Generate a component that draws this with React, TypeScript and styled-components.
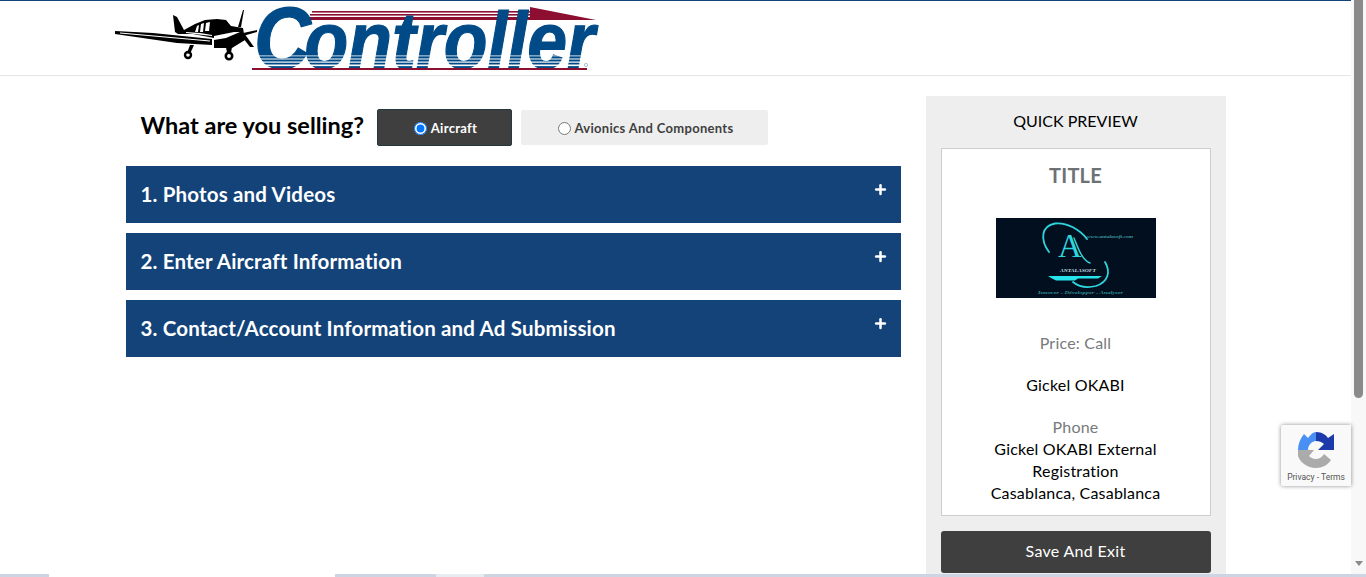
import styled, { createGlobalStyle } from 'styled-components';
import { Plus } from 'lucide-react';

const GlobalStyle = createGlobalStyle`
  html, body {
    margin: 0;
    height: 100%;
    overflow: hidden;
    background: #fff;
    font-family: Lato, "Open Sans", sans-serif;
  }
  * {
    box-sizing: border-box;
  }
`;

const Screen = styled.div`
  height: 100vh;
  display: flex;
  flex-direction: column;
  overflow: hidden;
`;

const Viewport = styled.div`
  height: 574px;
  display: flex;
  overflow: hidden;
  position: relative;
`;

const Page = styled.div`
  flex: 1;
  min-width: 0;
  border-top: 1px solid #134379;
`;

const Header = styled.header`
  height: 75px;
  padding: 4px 0 0 113px;
  border-bottom: 1px solid #e6e6e6;
`;

const Container = styled.main`
  width: 1100px;
  margin: 20px auto 0;
  display: flex;
  align-items: flex-start;
  gap: 25px;
`;

const LeftColumn = styled.section`
  width: 775px;
`;

const TypeRow = styled.div`
  height: 50px;
  padding: 13px 0 0 15px;
  margin-bottom: 20px;
  display: flex;
  align-items: center;
  gap: 9px;
`;

const TypeLabel = styled.h2`
  margin: -5px 4px 0 0;
  width: 223px;
  font-size: 23.5px;
  font-weight: 700;
  white-space: nowrap;
  color: #000;
`;

const TypeOption = styled.label<{ $active?: boolean; $width: number }>`
  width: ${(p) => p.$width}px;
  height: ${(p) => (p.$active ? 37 : 35)}px;
  padding-left: 3px;
  display: flex;
  align-items: center;
  justify-content: center;
  gap: 4px;
  font-size: 13px;
  font-weight: 700;
  letter-spacing: 0.3px;
  border-radius: 2px;
  color: ${(p) => (p.$active ? '#fff' : '#3f3f3f')};
  background: ${(p) => (p.$active ? '#3f3f3f' : '#eeeeee')};
  border: ${(p) => (p.$active ? '1px solid #24383f' : 'none')};

  input {
    margin: 1px 0 0;
    width: 13px;
    height: 13px;
  }
`;

const Accordion = styled.div`
  display: flex;
  flex-direction: column;
  gap: 10px;
`;

const AccordionBar = styled.div`
  height: 57px;
  padding: 0 15px 2px;
  display: flex;
  align-items: center;
  justify-content: space-between;
  background: #134379;
  color: #fff;
  font-size: 20.5px;
  font-weight: 700;
  letter-spacing: 0.17px;

  svg {
    margin: -9px -2px 0 0;
  }
`;

const PreviewPanel = styled.aside`
  width: 300px;
  padding: 14px 15px 20px;
  background: #eeeeee;
`;

const PreviewHeading = styled.h3`
  margin: 0 0 17px;
  height: 21px;
  line-height: 21px;
  font-size: 16px;
  font-weight: 400;
  text-align: center;
  color: #000;
`;

const PreviewCard = styled.div`
  height: 368px;
  padding: 14px 15px 0;
  background: #fff;
  border: 1px solid #cccccc;
  text-align: center;
`;

const CardTitle = styled.div`
  height: 24px;
  line-height: 24px;
  font-size: 20px;
  font-weight: 700;
  letter-spacing: 0.2px;
  color: #6e7174;
`;

const CardImage = styled.svg`
  display: block;
  width: 160px;
  height: 80px;
  margin: 31px auto 34px;
`;

const CardLine = styled.div<{ $muted?: boolean; $gap?: number }>`
  line-height: 22px;
  font-size: 16px;
  letter-spacing: 0.2px;
  color: ${(p) => (p.$muted ? '#777a7c' : '#000')};
  margin-top: ${(p) => p.$gap ?? 0}px;
`;

const SaveButton = styled.button`
  display: block;
  width: 100%;
  height: 42px;
  margin-top: 15px;
  padding: 0 0 3px;
  border: none;
  border-radius: 3px;
  background: #3f3f3f;
  color: #fff;
  font-family: inherit;
  font-size: 16px;
  letter-spacing: 0.3px;
`;

const ScrollTrack = styled.div`
  width: 15px;
  flex: none;
  background: #f8f8f8;
  display: flex;
  flex-direction: column;
  align-items: center;
  justify-content: space-between;
  padding-bottom: 8px;
`;

const ScrollThumb = styled.div`
  width: 9px;
  height: 398px;
  background: #8a8a8a;
  border-radius: 0 0 5px 5px;
`;

const ScrollArrow = styled.div`
  width: 0;
  height: 0;
  border-left: 4.5px solid transparent;
  border-right: 4.5px solid transparent;
  border-top: 5px solid #8a8a8a;
`;

const RecaptchaBadge = styled.div`
  position: absolute;
  left: 1281px;
  top: 425px;
  width: 70px;
  height: 61px;
  background: #f9f9f9;
  border-radius: 2px 0 0 2px;
  box-shadow: 0 0 4px rgba(0, 0, 0, 0.45);
  display: flex;
  flex-direction: column;
  align-items: center;
  padding-top: 7px;
`;

const RecaptchaTerms = styled.div`
  margin-top: 3px;
  font-family: Roboto, sans-serif;
  font-size: 8.5px;
  line-height: 12px;
  white-space: nowrap;
  color: #555;
`;

const TabStrip = styled.div`
  height: 3px;
  flex: none;
  display: flex;
  background: #cdd4e2;
`;

const StripTab = styled.div<{ $width: number; $left: number; $tone: string }>`
  width: ${(p) => p.$width}px;
  margin-left: ${(p) => p.$left}px;
  background: ${(p) => p.$tone};
`;

function ControllerLogo() {
  return (
    <svg width="484" height="67" viewBox="113 5 484 67" style={{ display: 'block', overflow: 'visible' }}>
      {/* red arrow behind the word */}
      <g fill="#8c0f32">
        <rect x="312" y="11" width="218" height="1.6" />
        <rect x="310" y="14" width="225" height="1.6" />
        <rect x="308" y="17" width="240" height="3" />
        <polygon points="530,7 596,20 530,20" />
      </g>
      {/* plane */}
      <g fill="#000">
        <polygon points="115,31 153,33 212,39 212,45 177,43 115,34" />
        <polygon points="173,15 177,17 184,30 195,24 205,20 217,19 226,20 231,26 243,28 245,40 232,48 214,48 214,38 193,34 178,34 175,32" />
        <polygon points="243,10 244,10 241,27 238,27" />
        <polygon points="240,34 244,33 254,47 250,47" />
        <polygon points="243,33 257,30 257,32 243,36" />
        <polygon points="190,45 194,45 190,54 187,53" />
        <polygon points="226,47 232,47 231,53 227,53" />
        <circle cx="188" cy="55" r="3" fill="none" stroke="#000" strokeWidth="2.4" />
        <circle cx="229" cy="56" r="3.2" fill="none" stroke="#000" strokeWidth="2.6" />
      </g>
      <g fill="#fff">
        <polygon points="195,32 197,26 199,25 198,32" />
        <polygon points="200,32 201,24 204,23 203,32" />
        <polygon points="205,31 206,23 210,22 209,31" />
        <polygon points="120,32.6 210,40.6 210,41.6 120,33.4" />
        <polygon points="214,36 234,32 240,32 226,38 214,40" />
        <polygon points="186,32 200,33 212,35 212,36 186,33" />
      </g>
      {/* word, squeezed as one text */}
      <text
        transform="translate(254 68) scale(0.895 1)"
        fill="#004b87"
        stroke="#004b87"
        strokeWidth="1.2"
        fontFamily='"Liberation Sans", sans-serif'
        fontWeight="700"
        fontStyle="italic"
      >
        <tspan fontSize="88">C</tspan>
        <tspan fontSize="80" dx="-7">ontroller</tspan>
      </text>
      {/* speed lines cut through the bottom of the word */}
      <g fill="#fff">
        <rect x="250" y="55.5" width="345" height="0.8" />
        <rect x="250" y="58.5" width="345" height="1" />
        <rect x="250" y="61.5" width="345" height="1.2" />
        <rect x="250" y="64.5" width="345" height="1.6" />
      </g>
      <rect x="252" y="68" width="335" height="2" fill="#8c0f32" />
      <circle cx="586" cy="65" r="1.6" fill="none" stroke="#7b93b0" strokeWidth="0.6" />
    </svg>
  );
}

function AntalasoftImage() {
  return (
    <CardImage viewBox="0 0 160 80">
      <rect width="160" height="80" fill="#020f1e" />
      <g fill="none" stroke="#2fd5de" strokeLinecap="round">
        <path d="M53 34 C44 22 45 8 59 5.5 C71 4 84 12 91 21" strokeWidth="1.8" />
        <path d="M109 44 C115 54 112 64 100 68 C92 70 83 69 77 64" strokeWidth="1.8" />
        <path d="M78 20 C82 30 86 42 94 45" strokeWidth="1.4" />
      </g>
      <text x="62" y="39" fontSize="33" fontFamily='"Liberation Serif", serif' fill="#2fd5de">A</text>
      <path d="M52 58 H106 L102 60.5 H82 L79 62.5 H60 L56 60.5 Z" fill="#27e3ea" />
      <g fontFamily='"Liberation Serif", serif' fontStyle="italic" fontWeight="700">
        <text x="91" y="20" fontSize="4.6" fill="#3f9ba3" textLength="46" lengthAdjust="spacingAndGlyphs">www.antalasoft.com</text>
        <text x="64" y="54" fontSize="4.6" fill="#c2dfe0" textLength="36" lengthAdjust="spacingAndGlyphs">ANTALASOFT</text>
        <text x="42" y="76" fontSize="5" fill="#2f8f96" textLength="85" lengthAdjust="spacingAndGlyphs">Innover - Développer - Analyser</text>
      </g>
    </CardImage>
  );
}

function RecaptchaIcon() {
  return (
    <svg width="36" height="36" viewBox="0 0 36 36">
      <path d="M0 18 C0 12 2 7 6 2 L10 6 C13 2 15 0 18 0 V9 C14 9 10 13 10 18 Z" fill="#4a90f4" />
      <path d="M18 0 C24 0 28 3 30 6 L36 2 V18 H20 L26 12 C24 10 21 9 18 9 Z" fill="#1c3aa9" />
      <path d="M0 18 H16 L11 24 C13 26 15 27 18 27 C21 27 24 25.5 26 22 L33 28 C30 33 24 36 18 36 C9 36 2 30 0 24 Z" fill="#ababab" />
    </svg>
  );
}

const sections = [
  '1. Photos and Videos',
  '2. Enter Aircraft Information',
  '3. Contact/Account Information and Ad Submission',
];

export default function App() {
  return (
    <Screen>
      <GlobalStyle />
      <Viewport>
        <Page>
          <Header>
            <ControllerLogo />
          </Header>
          <Container>
            <LeftColumn>
              <TypeRow>
                <TypeLabel>What are you selling?</TypeLabel>
                <TypeOption $active $width={135}>
                  <input type="radio" name="type" defaultChecked />
                  Aircraft
                </TypeOption>
                <TypeOption $width={247}>
                  <input type="radio" name="type" />
                  Avionics And Components
                </TypeOption>
              </TypeRow>
              <Accordion>
                {sections.map((title) => (
                  <AccordionBar key={title}>
                    {title}
                    <Plus size={15} strokeWidth={4} />
                  </AccordionBar>
                ))}
              </Accordion>
            </LeftColumn>
            <PreviewPanel>
              <PreviewHeading>QUICK PREVIEW</PreviewHeading>
              <PreviewCard>
                <CardTitle>TITLE</CardTitle>
                <AntalasoftImage />
                <CardLine $muted>Price: Call</CardLine>
                <CardLine $gap={20}>Gickel OKABI</CardLine>
                <CardLine $muted $gap={20}>Phone</CardLine>
                <CardLine>Gickel OKABI External Registration</CardLine>
                <CardLine>Casablanca, Casablanca</CardLine>
              </PreviewCard>
              <SaveButton>Save And Exit</SaveButton>
            </PreviewPanel>
          </Container>
        </Page>
        <ScrollTrack>
          <ScrollThumb />
          <ScrollArrow />
        </ScrollTrack>
        <RecaptchaBadge>
          <RecaptchaIcon />
          <RecaptchaTerms>Privacy - Terms</RecaptchaTerms>
        </RecaptchaBadge>
      </Viewport>
      <TabStrip>
        <StripTab $left={49} $width={286} $tone="#ffffff" />
        <StripTab $left={101} $width={48} $tone="#e8ebf0" />
      </TabStrip>
    </Screen>
  );
}
